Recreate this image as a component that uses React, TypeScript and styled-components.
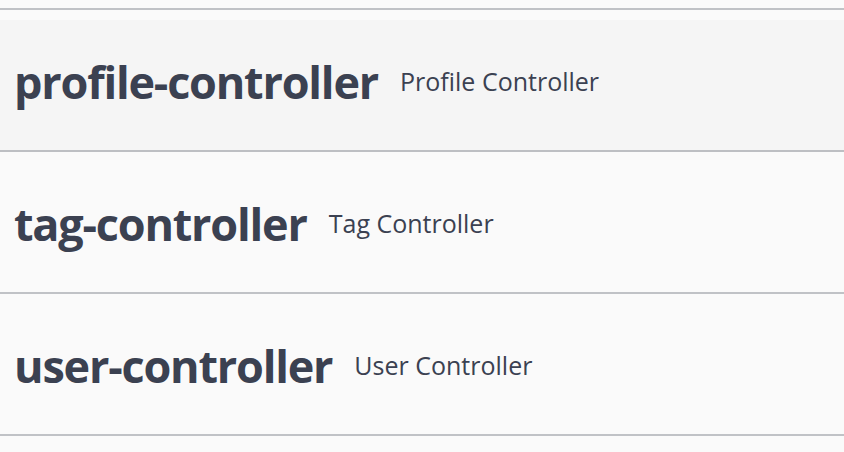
import styled, { createGlobalStyle } from 'styled-components';

const GlobalStyle = createGlobalStyle`
	html, body {
		margin: 0;
		padding: 0;
		background: #fafafa;
		font-family: "Open Sans", "Noto Sans", sans-serif;
		color: #3b4151;
	}
`;

const tags = [
	{ name: 'profile-controller', description: 'Profile Controller', active: true },
	{ name: 'tag-controller', description: 'Tag Controller', active: false },
	{ name: 'user-controller', description: 'User Controller', active: false },
];

const Page = styled.div`
	padding-top: 8px;
	.topLine {
		border-bottom: 2px solid rgba(59, 65, 81, 0.3);
	}
`;

const TagSection = styled.div`
	margin-top: 10px;
`;

const TagHeader = styled.h3<{ $active?: boolean }>`
	display: flex;
	align-items: center;
	height: 132px;
	margin: 0;
	padding: 0 20px 8px 14px;
	box-sizing: border-box;
	border-bottom: 2px solid rgba(59, 65, 81, 0.3);
	background: ${({ $active }) => ($active ? 'rgba(0, 0, 0, 0.02)' : 'transparent')};
	cursor: pointer;
`;

const TagName = styled.span`
	font-size: 45px;
	line-height: 1;
	font-weight: 700;
	letter-spacing: -1.2px;
`;

const TagDescription = styled.small`
	padding: 0 20px 0 22px;
	font-size: 25px;
	line-height: 1;
	font-weight: 400;
	flex: 1;
`;

export default function App() {
	return (
		<>
			<GlobalStyle />
			<Page>
				<div className="topLine" />
				{tags.map(({ name, description, active }) => (
					<TagSection key={name}>
						<TagHeader $active={active}>
							<TagName>{name}</TagName>
							<TagDescription>{description}</TagDescription>
						</TagHeader>
					</TagSection>
				))}
			</Page>
		</>
	);
}
